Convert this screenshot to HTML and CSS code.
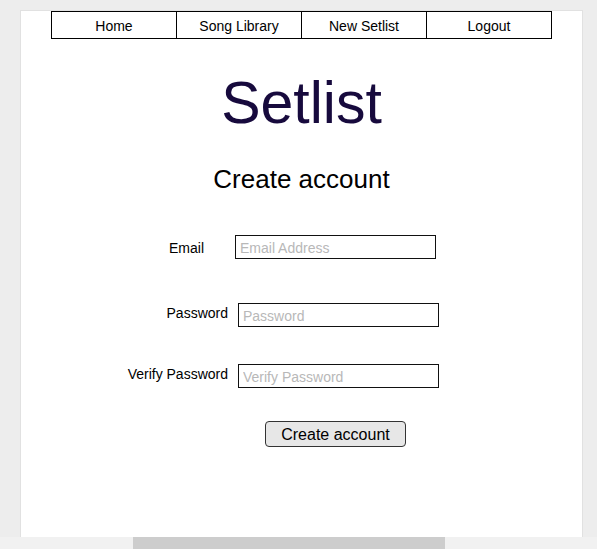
FILE: index.html
```html
<!DOCTYPE html>
<html lang="en">
<head>
<meta charset="utf-8">
<title>Setlist - Create account</title>
<link rel="stylesheet" href="styles.css">
</head>
<body>
<div class="viewport">
  <div class="card">
    <nav class="nav">
      <a class="nav-item" href="#">Home</a>
      <a class="nav-item" href="#">Song Library</a>
      <a class="nav-item" href="#">New Setlist</a>
      <a class="nav-item" href="#">Logout</a>
    </nav>
    <h1 class="title">Setlist</h1>
    <h2 class="subtitle">Create account</h2>
    <form class="form">
      <div class="row row-email">
        <label class="label label-tall" for="email">Email</label>
        <input class="field" id="email" type="text" placeholder="Email Address">
      </div>
      <div class="row row-pass">
        <label class="label" for="pw">Password</label>
        <input class="field" id="pw" type="password" placeholder="Password">
      </div>
      <div class="row row-verify">
        <label class="label" for="pw2">Verify Password</label>
        <input class="field" id="pw2" type="password" placeholder="Verify Password">
      </div>
      <div class="actions">
        <button class="btn" type="button">Create account</button>
      </div>
    </form>
  </div>
</div>
<div class="hscroll"><div class="hscroll-thumb"></div></div>
</body>
</html>
```
FILE: styles.css
```css
* { box-sizing: border-box; }

html, body {
  margin: 0;
  height: 100%;
}

body {
  background: #ededed;
  font-family: "Liberation Sans", Arial, sans-serif;
  color: #000;
  display: flex;
  flex-direction: column;
  overflow: hidden;
}

.viewport {
  flex: 1;
  overflow: hidden;
  padding: 10px 0 0 20px;
}

.card {
  width: 563px;
  min-height: 700px;
  background: #fff;
  border: 1px solid #e1e1e1;
}

.nav {
  width: 501px;
  height: 28px;
  margin: 0 auto;
  display: flex;
  border: 1px solid #000;
}

.nav-item {
  flex: 1;
  padding-top: 2px;
  text-align: center;
  font-size: 14px;
  line-height: 24px;
  color: #000;
  text-decoration: none;
}

.nav-item + .nav-item {
  border-left: 1px solid #000;
}

.title {
  margin: 31px 0 0;
  text-align: center;
  font-size: 59px;
  line-height: 66px;
  font-weight: normal;
  color: #170a3d;
}

.subtitle {
  margin: 28px 0 0;
  text-align: center;
  font-size: 26px;
  line-height: 30px;
  font-weight: normal;
}

.form {
  margin: 0 0 0 67px;
}

.row {
  display: grid;
  grid-template-columns: 140px 201px;
  column-gap: 10px;
  align-items: start;
}

.row-email {
  grid-template-columns: 116px 201px;
  column-gap: 31px;
  margin-top: 41px;
}

.row-pass { margin-top: 42px; }
.row-verify { margin-top: 37px; }

.label {
  text-align: right;
  font-size: 14px;
  line-height: 20px;
  white-space: nowrap;
}

.label-tall { line-height: 26px; }

.field {
  width: 201px;
  height: 24px;
  margin: 0;
  padding: 2px 4px 0;
  border: 1px solid #111;
  border-radius: 0;
  font-family: "Liberation Sans", Arial, sans-serif;
  font-size: 14px;
  color: #000;
  background: #fff;
  outline: none;
}

.field::placeholder {
  color: #b8b8b8;
  opacity: 1;
}

.actions {
  margin-top: 33px;
  padding-left: 177px;
}

.btn {
  width: 141px;
  height: 26px;
  margin: 0;
  padding: 2px 0 0;
  border: 1px solid #333;
  border-radius: 4px;
  background: #e7e7e7;
  font-family: "Liberation Sans", Arial, sans-serif;
  font-size: 16px;
  line-height: 22px;
  color: #000;
}

.hscroll {
  flex: none;
  height: 12px;
  background: #f1f1f1;
  padding-left: 133px;
}

.hscroll-thumb {
  width: 312px;
  height: 100%;
  background: #cdcdcd;
}
```
